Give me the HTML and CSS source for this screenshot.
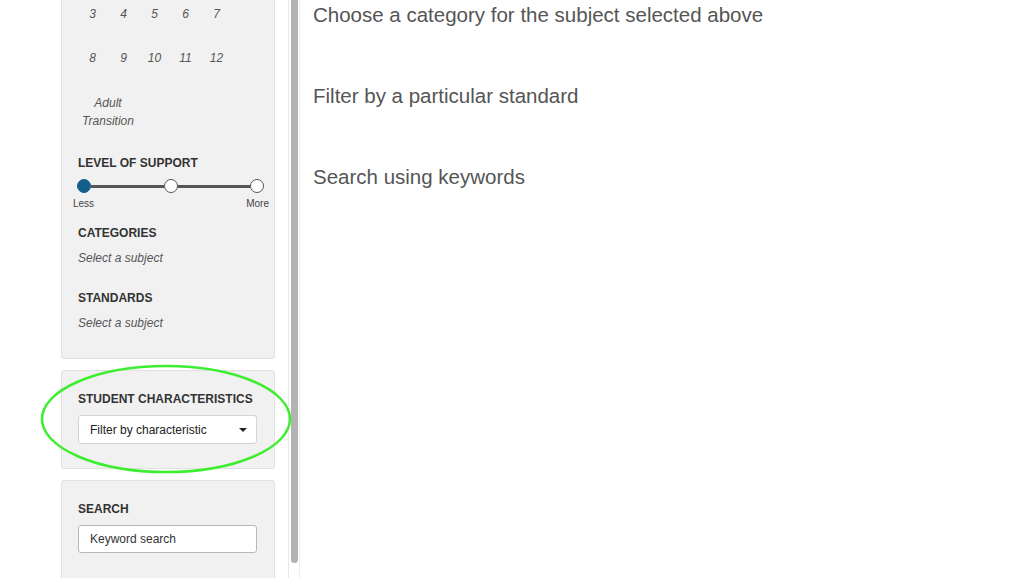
FILE: index.html
```html
<!DOCTYPE html>
<html>
<head>
<meta charset="utf-8">
<link rel="stylesheet" href="styles.css">
</head>
<body>
<div class="page">
  <aside class="sidebar">
    <section class="panel panel-grades">
      <div class="grades">
        <span>3</span><span>4</span><span>5</span><span>6</span><span>7</span>
        <span>8</span><span>9</span><span>10</span><span>11</span><span>12</span>
      </div>
      <div class="adult">Adult<br>Transition</div>
      <h3 class="heading h-support">LEVEL OF SUPPORT</h3>
      <div class="slider">
        <span class="dot dot-on"></span>
        <span class="track"></span>
        <span class="dot"></span>
        <span class="track"></span>
        <span class="dot"></span>
      </div>
      <div class="slider-labels"><span>Less</span><span>More</span></div>
      <h3 class="heading h-cat">CATEGORIES</h3>
      <p class="hint">Select a subject</p>
      <h3 class="heading h-std">STANDARDS</h3>
      <p class="hint">Select a subject</p>
    </section>
    <section class="panel panel-char">
      <h3 class="heading">STUDENT CHARACTERISTICS</h3>
      <div class="select">
        <span>Filter by characteristic</span>
        <span class="caret"></span>
      </div>
      <svg class="circle-mark" width="254" height="112" viewBox="0 0 254 112">
        <ellipse cx="127" cy="56" rx="124" ry="53" fill="none" stroke="#3ded2f" stroke-width="2.5"/>
      </svg>
    </section>
    <section class="panel panel-search">
      <h3 class="heading">SEARCH</h3>
      <div class="input">Keyword search</div>
    </section>
  </aside>
  <div class="scrollbar"><div class="thumb"></div></div>
  <main class="main">
    <p class="line">Choose a category for the subject selected above</p>
    <p class="line">Filter by a particular standard</p>
    <p class="line">Search using keywords</p>
  </main>
</div>
</body>
</html>
```

FILE: styles.css
```css
html, body {
  margin: 0;
  padding: 0;
  background: #ffffff;
  font-family: "Liberation Sans", Arial, sans-serif;
  overflow: hidden;
}

.page {
  display: flex;
  height: 578px;
  padding-left: 61px;
  box-sizing: border-box;
}

.sidebar {
  width: 214px;
  flex: none;
  display: flex;
  flex-direction: column;
  gap: 11px;
  margin-top: -20px;
}

.panel {
  position: relative;
  background: #f1f1f1;
  border: 1px solid #e2e2e2;
  border-radius: 3px;
  padding: 0 17px 0 16px;
}

.panel-grades {
  padding-top: 19px;
  padding-bottom: 27px;
}

.grades {
  display: grid;
  grid-template-columns: repeat(5, 31px);
  row-gap: 16px;
  margin-left: -1px;
  font-size: 12px;
  font-style: italic;
  color: #555;
}

.grades span {
  height: 28px;
  line-height: 28px;
  text-align: center;
}

.adult {
  width: 60px;
  margin-top: 22px;
  font-size: 12px;
  font-style: italic;
  line-height: 18px;
  color: #555;
  text-align: center;
}

.heading {
  margin: 0;
  font-size: 12px;
  line-height: 16px;
  font-weight: bold;
  color: #333;
}

.h-support { margin-top: 25px; }

.slider {
  display: flex;
  align-items: center;
  height: 16px;
  margin-top: 7px;
  width: 187px;
  margin-left: -1px;
}

.dot {
  width: 12px;
  height: 12px;
  border: 1.5px solid #555;
  border-radius: 50%;
  background: #fff;
  flex: none;
}

.dot-on {
  background: #135e8a;
  border-color: #135e8a;
}

.track {
  flex: 1;
  height: 3px;
  background: #555;
}

.slider-labels {
  display: flex;
  justify-content: space-between;
  width: 196px;
  margin-left: -5px;
  margin-top: 4px;
  font-size: 10px;
  line-height: 12px;
  color: #444;
}

.h-cat { margin-top: 15px; }
.h-std { margin-top: 24px; }

.hint {
  margin: 9px 0 0;
  font-size: 12px;
  line-height: 16px;
  font-style: italic;
  color: #555;
}

.panel-char {
  padding-top: 20px;
  padding-bottom: 24px;
}

.select {
  display: flex;
  align-items: center;
  justify-content: space-between;
  margin-top: 8px;
  height: 29px;
  box-sizing: border-box;
  padding: 0 9px 0 11px;
  background: #fff;
  border: 1px solid #d4d4d4;
  border-radius: 3px;
  font-size: 12px;
  color: #222;
}

.caret {
  width: 0;
  height: 0;
  border-left: 4px solid transparent;
  border-right: 4px solid transparent;
  border-top: 4px solid #222;
}

.circle-mark {
  position: absolute;
  left: -23px;
  top: -8px;
  pointer-events: none;
}

.panel-search {
  padding-top: 20px;
  padding-bottom: 40px;
}

.input {
  margin-top: 8px;
  height: 28px;
  box-sizing: border-box;
  padding: 0 11px;
  line-height: 26px;
  background: #fff;
  border: 1px solid #b8b8b8;
  border-radius: 3px;
  font-size: 12px;
  color: #333;
}

.scrollbar {
  flex: none;
  width: 12px;
  height: 578px;
  margin-left: 13px;
  box-sizing: border-box;
  border-left: 1px solid #e9e9e9;
  border-right: 1px solid #efefef;
  padding-left: 2px;
}

.thumb {
  width: 7px;
  height: 563px;
  background: #b3b3b3;
  border-radius: 0 0 4px 4px;
}

.main {
  padding-left: 13px;
  padding-top: 3px;
}

.line {
  margin: 0 0 57px;
  font-size: 20.5px;
  line-height: 24px;
  color: #555;
}
```
